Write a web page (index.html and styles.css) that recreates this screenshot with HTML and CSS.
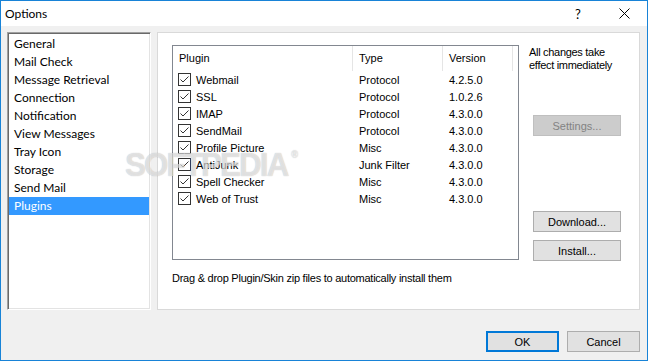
FILE: index.html
```html
<!DOCTYPE html>
<html lang="en">
<head>
  <meta charset="UTF-8">
  <title>Options</title>
  <link rel="stylesheet" href="styles.css">
</head>
<body>
  <div class="window">
    <div class="titlebar">
      <span class="title">Options</span>
      <span class="caption-btn">?</span>
      <span class="caption-btn">
        <svg width="11" height="11" viewBox="0 0 11 11"><path d="M0.5 0.5L10.5 10.5M10.5 0.5L0.5 10.5" stroke="#000" stroke-width="1" fill="none"/></svg>
      </span>
    </div>

    <div class="content">
      <ul class="nav">
        <li>General</li>
        <li>Mail Check</li>
        <li>Message Retrieval</li>
        <li>Connection</li>
        <li>Notification</li>
        <li>View Messages</li>
        <li>Tray Icon</li>
        <li>Storage</li>
        <li>Send Mail</li>
        <li class="selected">Plugins</li>
      </ul>

      <div class="page">
        <div class="top">
          <div class="listview">
            <div class="lv-head">
              <span class="col-name">Plugin</span>
              <span class="col-type">Type</span>
              <span class="col-ver">Version</span>
            </div>
            <div class="lv-row">
              <span class="col-name"><svg class="cb" viewBox="0 0 13 13"><rect x="0.5" y="0.5" width="12" height="12" fill="#fff" stroke="#333"/><path d="M2.5 6.5L5 9L10.5 3.5" fill="none" stroke="#333"/></svg>Webmail</span>
              <span class="col-type">Protocol</span>
              <span class="col-ver">4.2.5.0</span>
            </div>
            <div class="lv-row">
              <span class="col-name"><svg class="cb" viewBox="0 0 13 13"><rect x="0.5" y="0.5" width="12" height="12" fill="#fff" stroke="#333"/><path d="M2.5 6.5L5 9L10.5 3.5" fill="none" stroke="#333"/></svg>SSL</span>
              <span class="col-type">Protocol</span>
              <span class="col-ver">1.0.2.6</span>
            </div>
            <div class="lv-row">
              <span class="col-name"><svg class="cb" viewBox="0 0 13 13"><rect x="0.5" y="0.5" width="12" height="12" fill="#fff" stroke="#333"/><path d="M2.5 6.5L5 9L10.5 3.5" fill="none" stroke="#333"/></svg>IMAP</span>
              <span class="col-type">Protocol</span>
              <span class="col-ver">4.3.0.0</span>
            </div>
            <div class="lv-row">
              <span class="col-name"><svg class="cb" viewBox="0 0 13 13"><rect x="0.5" y="0.5" width="12" height="12" fill="#fff" stroke="#333"/><path d="M2.5 6.5L5 9L10.5 3.5" fill="none" stroke="#333"/></svg>SendMail</span>
              <span class="col-type">Protocol</span>
              <span class="col-ver">4.3.0.0</span>
            </div>
            <div class="lv-row">
              <span class="col-name"><svg class="cb" viewBox="0 0 13 13"><rect x="0.5" y="0.5" width="12" height="12" fill="#fff" stroke="#333"/><path d="M2.5 6.5L5 9L10.5 3.5" fill="none" stroke="#333"/></svg>Profile Picture</span>
              <span class="col-type">Misc</span>
              <span class="col-ver">4.3.0.0</span>
            </div>
            <div class="lv-row">
              <span class="col-name"><svg class="cb" viewBox="0 0 13 13"><rect x="0.5" y="0.5" width="12" height="12" fill="#fff" stroke="#333"/><path d="M2.5 6.5L5 9L10.5 3.5" fill="none" stroke="#333"/></svg>AntiJunk</span>
              <span class="col-type">Junk Filter</span>
              <span class="col-ver">4.3.0.0</span>
            </div>
            <div class="lv-row">
              <span class="col-name"><svg class="cb" viewBox="0 0 13 13"><rect x="0.5" y="0.5" width="12" height="12" fill="#fff" stroke="#333"/><path d="M2.5 6.5L5 9L10.5 3.5" fill="none" stroke="#333"/></svg>Spell Checker</span>
              <span class="col-type">Misc</span>
              <span class="col-ver">4.3.0.0</span>
            </div>
            <div class="lv-row">
              <span class="col-name"><svg class="cb" viewBox="0 0 13 13"><rect x="0.5" y="0.5" width="12" height="12" fill="#fff" stroke="#333"/><path d="M2.5 6.5L5 9L10.5 3.5" fill="none" stroke="#333"/></svg>Web of Trust</span>
              <span class="col-type">Misc</span>
              <span class="col-ver">4.3.0.0</span>
            </div>
          </div>

          <div class="side">
            <p class="note">All changes take<br>effect immediately</p>
            <button class="btn settings" disabled>Settings...</button>
            <button class="btn download">Download...</button>
            <button class="btn install">Install...</button>
          </div>
        </div>

        <p class="hint">Drag &amp; drop Plugin/Skin zip files to automatically install them</p>
      </div>
    </div>

    <div class="footer">
      <button class="btn ok">OK</button>
      <button class="btn">Cancel</button>
    </div>

    <span class="watermark">SOFTPEDIA<sup>®</sup></span>
  </div>
</body>
</html>
```

FILE: styles.css
```css
* {
  box-sizing: border-box;
}

body {
  margin: 0;
  font-family: Lato, "Noto Sans", sans-serif;
  font-size: 12px;
  color: #000;
  background: #f0f0f0;
}

.window {
  position: relative;
  width: 648px;
  height: 361px;
  border: 1px solid #1883d7;
  background: #f0f0f0;
  display: flex;
  flex-direction: column;
  overflow: hidden;
}

.titlebar {
  height: 25px;
  background: #fff;
  display: flex;
  align-items: center;
  padding-left: 4px;
}

.title {
  flex: 1;
}

.caption-btn {
  width: 46px;
  height: 25px;
  display: flex;
  align-items: center;
  justify-content: center;
  font-size: 13px;
}

.content {
  height: 284px;
  display: flex;
  gap: 6px;
  padding: 6px 7px 0 6px;
}

.nav {
  list-style: none;
  margin: 0;
  width: 144px;
  height: 278px;
  background: #fff;
  border-top: 1px solid #a0a0a0;
  border-left: 1px solid #a0a0a0;
  border-right: 1px solid #fff;
  border-bottom: 1px solid #fff;
  box-shadow: inset 1px 1px 0 #696969, inset -1px -1px 0 #e3e3e3;
  padding: 2px 1px 0 1px;
}

.nav li {
  height: 18px;
  line-height: 18px;
  padding-left: 5px;
}

.nav li.selected {
  background: #3399ff;
  color: #fff;
}

.page {
  flex: 1;
  height: 278px;
  background: #fff;
  border: 1px solid #d9d9d9;
  padding: 12px 0 0 14px;
  font-family: "Liberation Sans", Arial, sans-serif;
  font-size: 11px;
}

.top {
  display: flex;
}

.listview {
  width: 347px;
  height: 215px;
  border: 1px solid #828790;
  background: #fff;
}

.lv-head {
  display: flex;
  height: 25px;
  align-items: center;
}

.lv-head span {
  height: 25px;
  line-height: 25px;
  border-right: 1px solid #e5e5e5;
}

.lv-row {
  display: flex;
  height: 17px;
  align-items: center;
}

.col-name {
  width: 180px;
  padding-left: 6px;
  display: flex;
  align-items: center;
}

.col-type {
  width: 90px;
  padding-left: 6px;
}

.col-ver {
  width: 70px;
  padding-left: 6px;
}

.lv-row .col-name {
  padding-left: 5px;
}

.cb {
  width: 13px;
  height: 13px;
  margin-right: 5px;
  flex: none;
}

.side {
  margin-left: 10px;
  display: flex;
  flex-direction: column;
  align-items: flex-start;
}

.note {
  margin: 1px 0 0;
  line-height: 13px;
  letter-spacing: -0.3px;
}

.btn {
  width: 88px;
  height: 21px;
  padding: 0;
  font-family: "Liberation Sans", Arial, sans-serif;
  font-size: 11px;
  color: #000;
  background: #e1e1e1;
  border: 1px solid #adadad;
}

.side .btn {
  margin-left: 4px;
}

.settings {
  margin-top: 43px;
  background: #cccccc;
  border-color: #bfbfbf;
  color: #838383;
}

.download {
  margin-top: 75px;
}

.install {
  margin-top: 8px;
}

.hint {
  margin: 9px 0 0;
  line-height: 16px;
  letter-spacing: -0.25px;
}

.footer {
  flex: 1;
  display: flex;
  justify-content: flex-end;
  gap: 8px;
  padding: 21px 7px 0 0;
}

.footer .btn {
  width: 73px;
}

.ok {
  border-color: #0078d7;
  box-shadow: inset 0 0 0 1px #0078d7;
}

.watermark {
  position: absolute;
  left: 124px;
  top: 144px;
  font-family: "Liberation Sans", Arial, sans-serif;
  font-size: 34px;
  font-weight: bold;
  letter-spacing: -2px;
  color: rgba(255, 255, 255, 0.6);
  text-shadow: 0 0 1px rgba(0, 0, 0, 0.3);
  transform: scaleX(0.92);
  transform-origin: left;
  pointer-events: none;
}

.watermark sup {
  font-size: 10px;
  vertical-align: 18px;
  margin-left: 4px;
}
```
